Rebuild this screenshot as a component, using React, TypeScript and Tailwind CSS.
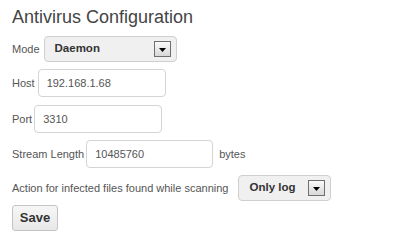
import React from "react";

const font = { fontFamily: '"Liberation Sans", Arial, sans-serif' };

function FakeSelect({ value, width }: { value: string; width: string }) {
  return (
    <div
      className={`flex items-center justify-between h-[26px] ${width} rounded-[4px] border border-[#cfcfcf] bg-[#f0f0f0] pl-[10px] pr-[5px]`}
    >
      <span className="text-[11.5px] font-bold text-[#333]">{value}</span>
      <span className="flex h-[16px] w-[17px] items-center justify-center border border-[#6f6f6f] bg-gradient-to-b from-[#fafafa] to-[#d8d8d8]">
        <svg width="7" height="4" viewBox="0 0 7 4" className="mt-[2px]">
          <path d="M0 0 L7 0 L3.5 4 Z" fill="#000" />
        </svg>
      </span>
    </div>
  );
}

function TextBox({ value, width }: { value: string; width: string }) {
  return (
    <input
      readOnly
      value={value}
      className={`h-[28px] ${width} rounded-[4px] border border-[#d4d4d4] bg-white px-[8px] text-[11px] text-[#555] outline-none`}
      style={font}
    />
  );
}

export default function App() {
  return (
    <div className="min-h-[250px] w-[404px] bg-white pl-[12px] pt-[6px] text-[11px] text-[#555]" style={font}>
      <h1 className="text-[18px] leading-[22px] text-[#444]">Antivirus Configuration</h1>
      <div className="mt-[8px] flex items-center gap-[4px]">
        <span>Mode</span>
        <FakeSelect value="Daemon" width="w-[133px]" />
      </div>
      <div className="mt-[7px] flex items-center gap-[3px]">
        <span>Host</span>
        <TextBox value="192.168.1.68" width="w-[128px]" />
      </div>
      <div className="mt-[8px] flex items-center gap-[2px]">
        <span>Port</span>
        <TextBox value="3310" width="w-[128px]" />
      </div>
      <div className="mt-[7px] flex items-center gap-[2px]">
        <span>Stream Length</span>
        <TextBox value="10485760" width="w-[127px]" />
        <span className="ml-[4px]">bytes</span>
      </div>
      <div className="mt-[7px] flex items-center gap-[10px]">
        <span>Action for infected files found while scanning</span>
        <FakeSelect value="Only log" width="w-[93px]" />
      </div>
      <button
        className="mt-[4px] h-[26px] w-[46px] rounded-[3px] border border-[#c4c4c4] bg-gradient-to-b from-[#f6f6f6] to-[#e8e8e8] text-[13px] font-bold text-[#333]"
        style={font}
      >
        Save
      </button>
    </div>
  );
}
